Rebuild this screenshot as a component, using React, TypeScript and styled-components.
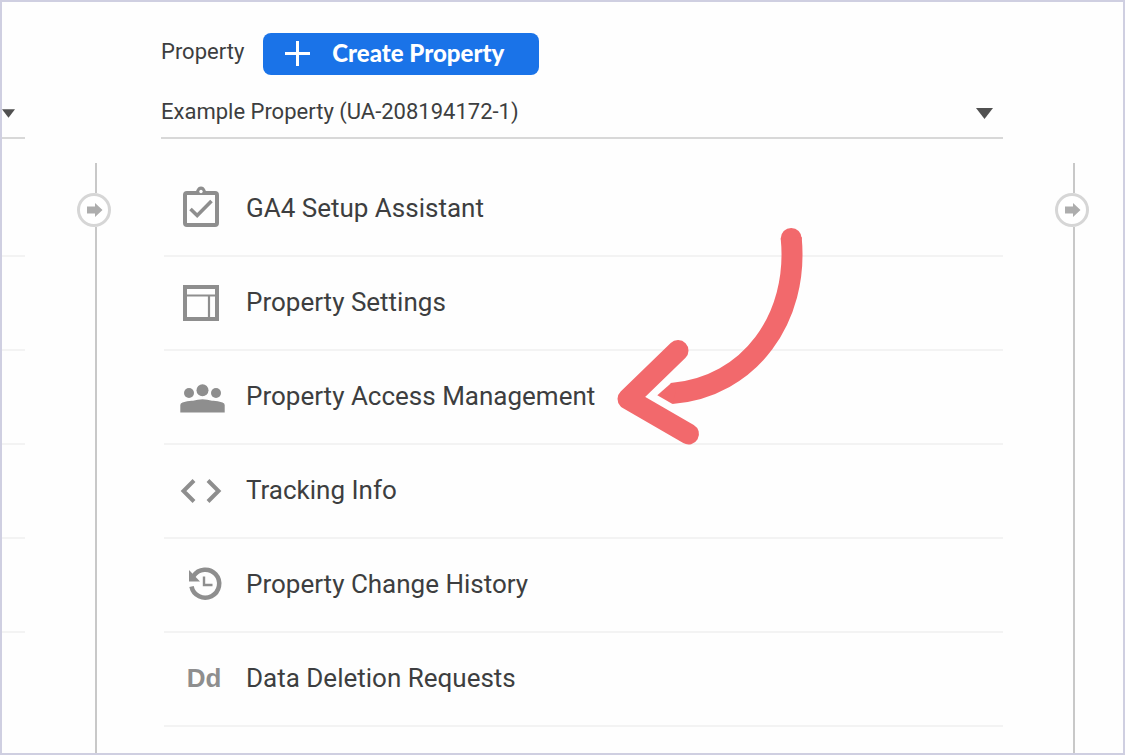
import React from "react";
import styled, { createGlobalStyle } from "styled-components";

const GlobalStyle = createGlobalStyle`
  * { box-sizing: border-box; }
  body {
    margin: 0;
    background: #fefefe;
    color: #3d3e40;
    font-family: Roboto, "Liberation Sans", sans-serif;
  }
`;

const Page = styled.div`
  display: flex;
  min-height: 100vh;
  border: 2px solid #cfcfe1;
`;

const AccountColumn = styled.aside`
  flex: none;
  width: 23px;
  overflow: hidden;
`;

const AccountPicker = styled.div`
  display: flex;
  align-items: center;
  justify-content: flex-end;
  height: 50px;
  margin-top: 87px;
  margin-bottom: 24px;
  padding-right: 10px;
  border-bottom: 2px solid #d8d8d8;
`;

const AccountRow = styled.div`
  height: 94px;
  border-bottom: 2px solid #f3f3f3;
`;

const Rail = styled.div<{ $width: number }>`
  display: flex;
  flex-direction: column;
  flex: none;
  width: ${(p) => p.$width}px;
  padding: 161px 0 0 52px;
`;

const RailLine = styled.span<{ $grow?: boolean }>`
  flex: ${(p) => (p.$grow ? "1" : "0 0 30px")};
  width: 2px;
  margin-left: 18px;
  background: #c8c8c8;
`;

const RailButton = styled.button`
  display: flex;
  align-items: center;
  justify-content: center;
  width: 34px;
  height: 34px;
  padding: 0;
  border: 3px solid #d6d6d6;
  border-radius: 50%;
  background: #fff;
  cursor: pointer;
`;

const Main = styled.main`
  flex: 1;
  min-width: 0;
`;

const Header = styled.header`
  display: flex;
  align-items: flex-start;
  gap: 19px;
  padding-top: 31px;
`;

const HeaderLabel = styled.label`
  padding-top: 4px;
  font-size: 22px;
  line-height: 30px;
`;

const CreateButton = styled.button`
  display: flex;
  align-items: center;
  gap: 22px;
  width: 276px;
  height: 42px;
  padding: 0 0 2px 22px;
  border: 0;
  border-radius: 8px;
  background: #1a73e8;
  color: #fff;
  font: 900 24px/28px Lato, "Open Sans", sans-serif;
  cursor: pointer;
`;

const Picker = styled.div`
  display: grid;
  align-items: center;
  height: 50px;
  margin-top: 14px;
  border-bottom: 2px solid #d8d8d8;

  > * { grid-area: 1 / 1; }
  > svg {
    justify-self: end;
    margin-right: 10px;
    pointer-events: none;
  }
`;

const PickerSelect = styled.select`
  appearance: none;
  width: 100%;
  height: 48px;
  padding: 0 0 2px;
  border: 0;
  background: transparent;
  color: inherit;
  font: 400 22px/30px Roboto, "Liberation Sans", sans-serif;
`;

const Menu = styled.ul`
  margin: 24px 0 0 3px;
  padding: 0;
  list-style: none;
`;

const MenuItem = styled.li`
  position: relative;
  height: 94px;
  border-bottom: 2px solid #f3f3f3;
`;

const MenuLink = styled.a`
  display: flex;
  align-items: center;
  gap: 20px;
  height: 90px;
  padding-left: 14px;
  color: inherit;
  font-size: 26px;
  line-height: 32px;
  text-decoration: none;
`;

const IconBox = styled.span`
  display: flex;
  align-items: center;
  justify-content: center;
  flex: none;
  width: 48px;
  height: 48px;
  color: #8e8e8e;
`;

const LetterIcon = styled.span`
  font: 700 26px/30px "Liberation Sans", sans-serif;
  padding-left: 4px;
`;

const Pointer = styled.svg`
  position: absolute;
  top: -141px;
  left: 436px;
  z-index: 1;
  pointer-events: none;
`;

const Glyph = ({ children }: { children: React.ReactNode }) => (
  <svg width="48" height="48" viewBox="0 0 48 48" fill="none" stroke="currentColor" aria-hidden="true">
    {children}
  </svg>
);

const Caret = () => (
  <svg width="17" height="11" viewBox="0 0 17 11" aria-hidden="true">
    <path d="M0 0H17L8.5 11Z" fill="#505050" />
  </svg>
);

const ClipboardIcon = () => (
  <Glyph>
    <rect x="7" y="9" width="32" height="32" rx="2" strokeWidth="4" />
    <path d="M17 8C18.500 8 18.600 2.500 23 2.500S27.500 8 29 8V11H17Z" fill="currentColor" stroke="none" />
    <circle cx="23" cy="7.500" r="1.700" fill="#fff" stroke="none" />
    <path d="M12.500 25L19.200 31.500L33.500 17" strokeWidth="3.600" />
  </Glyph>
);

const LayoutIcon = () => (
  <Glyph>
    <rect x="7" y="9" width="32" height="32" strokeWidth="4" />
    <path d="M8 17.500H38M31 17.500V40" strokeWidth="2.200" />
  </Glyph>
);

const PeopleIcon = () => (
  <Glyph>
    <g fill="currentColor" stroke="none">
      <circle cx="24.500" cy="18.200" r="6" />
      <circle cx="11" cy="21" r="5" />
      <circle cx="38" cy="21" r="5" />
      <path d="M2.300 40.500V33Q2.300 31 4.500 30.500Q10 28.500 15 28.800Q24.500 25.500 34 28.800Q39 28.500 44.500 30.500Q46.700 31 46.700 33V40.500Z" />
    </g>
  </Glyph>
);

const CodeIcon = () => (
  <Glyph>
    <path d="M16 14.500L5.500 25L16 35.500M30 14.500L40.500 25L30 35.500" strokeWidth="4" />
  </Glyph>
);

const HistoryIcon = () => (
  <Glyph>
    <path d="M13.500 26.500A14 14 0 1 0 15.500 16" strokeWidth="4.500" />
    <path d="M11 10V21.500H22Z" fill="currentColor" stroke="none" />
    <path d="M26 16.500V25H34.500" strokeWidth="2.400" />
  </Glyph>
);

const ArrowPointer = () => (
  <Pointer width="220" height="250" viewBox="0 0 220 250" aria-hidden="true">
    <g fill="none" stroke="#f2696c" strokeWidth="21">
      <circle cx="191.200" cy="28.500" r="10.500" fill="#f2696c" stroke="none" />
      <path d="M191.200 28C199 108 150 177 71.500 183.500" />
      <path d="M57.300 185.300L71 173.200L76 180L72.500 194Z" fill="#f2696c" stroke="none" />
      <path d="M78 140.500L28 189L88.500 224" strokeLinecap="round" strokeLinejoin="round" />
    </g>
  </Pointer>
);

const items = [
  { label: "GA4 Setup Assistant", icon: <ClipboardIcon /> },
  { label: "Property Settings", icon: <LayoutIcon /> },
  { label: "Property Access Management", icon: <PeopleIcon />, highlighted: true },
  { label: "Tracking Info", icon: <CodeIcon /> },
  { label: "Property Change History", icon: <HistoryIcon /> },
  { label: "Data Deletion Requests", icon: <LetterIcon aria-hidden="true">Dd</LetterIcon> },
];

const ColumnRail = ({ width, label }: { width: number; label: string }) => (
  <Rail $width={width}>
    <RailLine />
    <RailButton aria-label={label}>
      <svg width="18" height="14" viewBox="0 0 18 14" aria-hidden="true">
        <path d="M2 3.500H10V0L17.500 7L10 14V10.500H2Z" fill="#adadad" />
      </svg>
    </RailButton>
    <RailLine $grow />
  </Rail>
);

export default function App() {
  return (
    <>
      <GlobalStyle />
      <Page>
        <AccountColumn>
          <AccountPicker>
            <Caret />
          </AccountPicker>
          {[1, 2, 3, 4, 5].map((row) => (
            <AccountRow key={row} />
          ))}
        </AccountColumn>
        <ColumnRail width={136} label="Move account column" />
        <Main>
          <Header>
            <HeaderLabel htmlFor="property">Property</HeaderLabel>
            <CreateButton>
              <svg width="25" height="25" viewBox="0 0 25 25" aria-hidden="true">
                <path d="M12.500 0V25M0 12.500H25" stroke="#fff" strokeWidth="3" />
              </svg>
              Create Property
            </CreateButton>
          </Header>
          <Picker>
            <PickerSelect id="property">
              <option>Example Property (UA-208194172-1)</option>
            </PickerSelect>
            <Caret />
          </Picker>
          <Menu>
            {items.map((item) => (
              <MenuItem key={item.label}>
                <MenuLink href="#">
                  <IconBox>{item.icon}</IconBox>
                  {item.label}
                </MenuLink>
                {item.highlighted && <ArrowPointer />}
              </MenuItem>
            ))}
          </Menu>
        </Main>
        <ColumnRail width={120} label="Move property column" />
      </Page>
    </>
  );
}
